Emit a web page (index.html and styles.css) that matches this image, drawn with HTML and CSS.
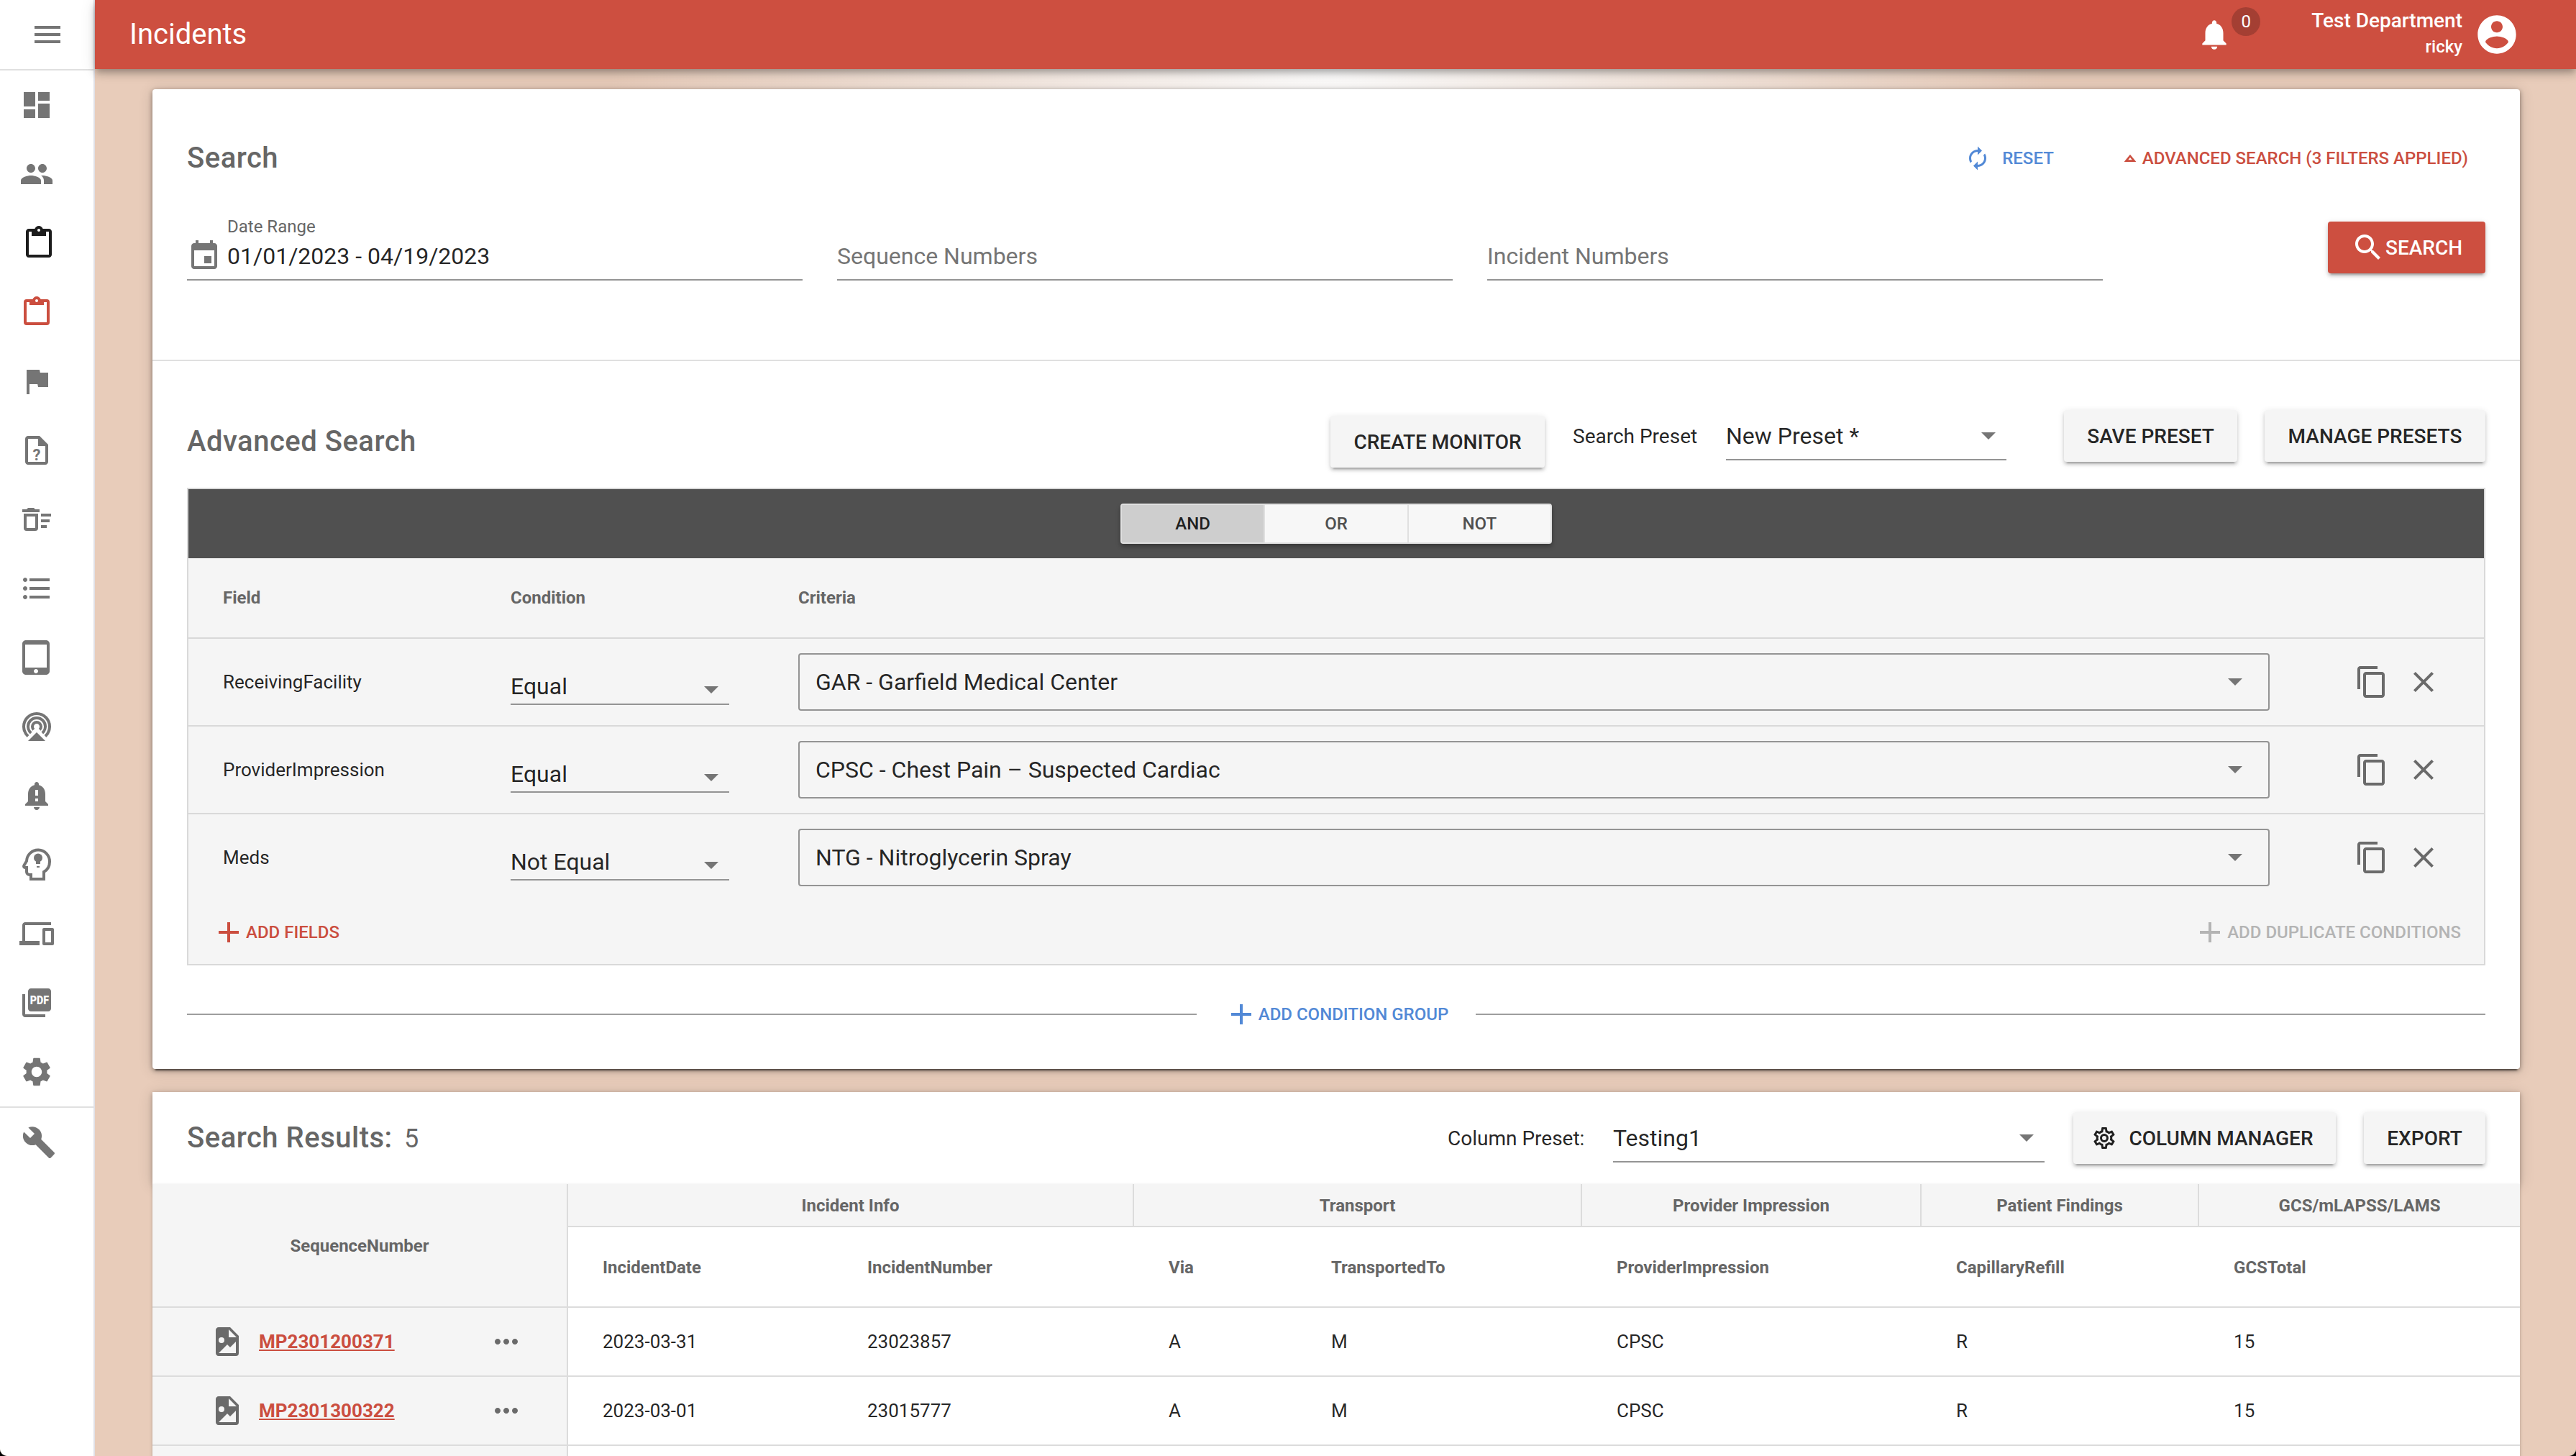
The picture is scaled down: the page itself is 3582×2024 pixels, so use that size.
FILE: index.html
```
<!DOCTYPE html>
<html lang="en">
<head>
  <meta charset="UTF-8">
  <title>Incidents</title>
  <link rel="stylesheet" href="styles.css">
</head>
<body>

<!-- shared icons -->
<svg class="icon-defs" xmlns="http://www.w3.org/2000/svg">
  <symbol id="i-bell" viewBox="0 0 24 24"><path d="M12 22c1.1 0 2-.9 2-2h-4c0 1.1.9 2 2 2zm6-6v-5c0-3.07-1.63-5.64-4.5-6.32V4c0-.83-.67-1.5-1.5-1.5s-1.5.67-1.5 1.5v.68C7.64 5.36 6 7.92 6 11v5l-2 2v1h16v-1l-2-2z"/></symbol>
  <symbol id="i-copy" viewBox="0 0 24 24"><path d="M16 1H4c-1.1 0-2 .9-2 2v14h2V3h12V1zm3 4H8c-1.1 0-2 .9-2 2v14c0 1.1.9 2 2 2h11c1.1 0 2-.9 2-2V7c0-1.1-.9-2-2-2zm0 16H8V7h11v14z"/></symbol>
  <symbol id="i-close" viewBox="0 0 24 24"><path d="M19 6.41L17.59 5 12 10.59 6.41 5 5 6.41 10.59 12 5 17.59 6.41 19 12 13.41 17.59 19 19 17.59 13.41 12z"/></symbol>
  <symbol id="i-plus" viewBox="0 0 24 24"><path d="M19 13h-6v6h-2v-6H5v-2h6V5h2v6h6v2z"/></symbol>
  <symbol id="i-file-image" viewBox="0 0 24 24"><path d="M13,9H18.5L13,3.5V9M6,2H14L20,8V20A2,2 0 0,1 18,22H6C4.89,22 4,21.1 4,20V4C4,2.89 4.89,2 6,2M6,20H18V12L14,16L12,14L6,20M8,9A2,2 0 0,0 6,11A2,2 0 0,0 8,13A2,2 0 0,0 10,11A2,2 0 0,0 8,9Z"/></symbol>
  <symbol id="i-dots" viewBox="0 0 24 24"><path d="M6 10c-1.1 0-2 .9-2 2s.9 2 2 2 2-.9 2-2-.9-2-2-2zm12 0c-1.1 0-2 .9-2 2s.9 2 2 2 2-.9 2-2-.9-2-2-2zm-6 0c-1.1 0-2 .9-2 2s.9 2 2 2 2-.9 2-2-.9-2-2-2z"/></symbol>
</svg>

<div class="app">
  <nav class="sidebar">
    <div class="menu-toggle">
      <svg class="icon" viewBox="0 0 24 24"><path d="M3 18h18v-2H3v2zm0-5h18v-2H3v2zm0-7v2h18V6H3z"/></svg>
    </div>
    <div class="nav-list">
      <svg class="icon" viewBox="0 0 24 24"><path d="M3 13h8V3H3v10zm0 8h8v-6H3v6zm10 0h8V11h-8v10zm0-18v6h8V3h-8z"/></svg>
      <svg class="icon" viewBox="0 0 24 24"><path d="M16 11c1.66 0 2.99-1.34 2.99-3S17.66 5 16 5c-1.66 0-3 1.34-3 3s1.34 3 3 3zm-8 0c1.66 0 2.99-1.34 2.99-3S9.66 5 8 5C6.34 5 5 6.34 5 8s1.34 3 3 3zm0 2c-2.33 0-7 1.17-7 3.5V19h14v-2.5c0-2.33-4.67-3.5-7-3.5zm8 0c-.29 0-.62.02-.97.05 1.16.84 1.97 1.97 1.97 3.45V19h6v-2.5c0-2.33-4.67-3.5-7-3.5z"/></svg>
      <svg class="icon dark" viewBox="0 0 24 24"><path d="M19 2h-4.18C14.4.84 13.3 0 12 0c-1.3 0-2.4.84-2.82 2H5c-1.1 0-2 .9-2 2v16c0 1.1.9 2 2 2h14c1.1 0 2-.9 2-2V4c0-1.1-.9-2-2-2zm-7 0c.55 0 1 .45 1 1s-.45 1-1 1-1-.45-1-1 .45-1 1-1zm7 18H5V4h2v3h10V4h2v16z"/></svg>
      <svg class="icon active" viewBox="0 0 24 24"><path d="M19,3H14.82C14.4,1.84 13.3,1 12,1C10.7,1 9.6,1.84 9.18,3H5A2,2 0 0,0 3,5V19A2,2 0 0,0 5,21H19A2,2 0 0,0 21,19V5A2,2 0 0,0 19,3M12,3A1,1 0 0,1 13,4A1,1 0 0,1 12,5A1,1 0 0,1 11,4A1,1 0 0,1 12,3M7,7H17V5H19V19H5V5H7V7Z"/></svg>
      <svg class="icon" viewBox="0 0 24 24"><path d="M14.4 6L14 4H5v17h2v-7h5.6l.4 2h7V6z"/></svg>
      <svg class="icon" viewBox="0 0 24 24"><path d="M14 2H6c-1.1 0-2 .9-2 2v16c0 1.1.9 2 2 2h12c1.1 0 2-.9 2-2V8l-6-6zm4 18H6V4h7v5h5v11z"/><text class="q-mark" x="12" y="19" text-anchor="middle">?</text></svg>
      <svg class="icon" viewBox="0 0 24 24"><path d="M15,16H19V18H15V16M15,8H22V10H15V8M15,12H21V14H15V12M11,10V18H5V10H11M13,8H3V18A2,2 0 0,0 5,20H11A2,2 0 0,0 13,18V8M14,5H11L10,4H6L5,5H2V7H14V5Z"/></svg>
      <svg class="icon" viewBox="0 0 24 24"><path d="M4 10.5c-.83 0-1.5.67-1.5 1.5s.67 1.5 1.5 1.5 1.5-.67 1.5-1.5-.67-1.5-1.5-1.5zm0-6c-.83 0-1.5.67-1.5 1.5S3.17 7.5 4 7.5 5.5 6.83 5.5 6 4.83 4.5 4 4.5zm0 12c-.83 0-1.5.68-1.5 1.5s.68 1.5 1.5 1.5 1.5-.68 1.5-1.5-.67-1.5-1.5-1.5zM7 19h14v-2H7v2zm0-6h14v-2H7v2zm0-8v2h14V5H7z"/></svg>
      <svg class="icon" viewBox="0 0 24 24"><path d="M18.5 0h-14C3.12 0 2 1.12 2 2.5v19C2 22.88 3.12 24 4.5 24h14c1.38 0 2.5-1.12 2.5-2.5v-19C21 1.12 19.88 0 18.5 0zm-7 23c-.83 0-1.5-.67-1.5-1.5s.67-1.5 1.5-1.5 1.5.67 1.5 1.5-.67 1.5-1.5 1.5zm7.5-4H4V3h15v16z"/></svg>
      <svg class="icon" viewBox="0 0 24 24"><path d="M12 16l-6 6h12z"/><path class="line" d="M6 18.7a9 9 0 1 1 12 0M8.1 16.5a6 6 0 1 1 7.8 0M9.9 14.2a3 3 0 1 1 4.2 0"/></svg>
      <svg class="icon" viewBox="0 0 24 24"><use href="#i-bell"/><path class="cutout" d="M11 8h2v4h-2zM11 14h2v2h-2z"/></svg>
      <svg class="icon" viewBox="0 0 24 24"><path class="line" d="M17 22H8v-3H7a2 2 0 0 1-2-2v-3H4c-.9 0-1.2-.8-.8-1.5L5 9.5A8 8 0 0 1 21 10c0 3-1.5 5.6-4 7v5z"/><circle cx="13" cy="7.2" r="3"/><path d="M11.5 9h3v2.5h-3zM12 13h2v1h-2z"/></svg>
      <svg class="icon" viewBox="0 0 24 24"><path d="M4 6h18V4H4c-1.1 0-2 .9-2 2v11H0v3h14v-3H4V6zm19 2h-6c-.55 0-1 .45-1 1v10c0 .55.45 1 1 1h6c.55 0 1-.45 1-1V9c0-.55-.45-1-1-1zm-1 10h-4v-8h4v8z"/></svg>
      <svg class="icon" viewBox="0 0 24 24"><path d="M20 2H8c-1.1 0-2 .9-2 2v12c0 1.1.9 2 2 2h12c1.1 0 2-.9 2-2V4c0-1.1-.9-2-2-2zM4 6H2v14c0 1.1.9 2 2 2h14v-2H4V6z"/><text class="pdf-label" x="14" y="12.9" text-anchor="middle" textLength="13.2" lengthAdjust="spacingAndGlyphs">PDF</text></svg>
      <svg class="icon" viewBox="0 0 24 24"><path d="M19.14 12.94c.04-.3.06-.61.06-.94 0-.32-.02-.64-.07-.94l2.03-1.58c.18-.14.23-.41.12-.61l-1.92-3.32c-.12-.22-.37-.29-.59-.22l-2.39.96c-.5-.38-1.03-.7-1.62-.94l-.36-2.54c-.04-.24-.24-.41-.48-.41h-3.84c-.24 0-.43.17-.47.41l-.36 2.54c-.59.24-1.13.57-1.62.94l-2.39-.96c-.22-.08-.47 0-.59.22L2.74 8.87c-.12.21-.08.47.12.61l2.03 1.58c-.05.3-.09.63-.09.94s.02.64.07.94l-2.03 1.58c-.18.14-.23.41-.12.61l1.92 3.32c.12.22.37.29.59.22l2.39-.96c.5.38 1.03.7 1.62.94l.36 2.54c.05.24.24.41.48.41h3.84c.24 0 .44-.17.47-.41l.36-2.54c.59-.24 1.13-.56 1.62-.94l2.39.96c.22.08.47 0 .59-.22l1.92-3.32c.12-.22.07-.47-.12-.61l-2.01-1.58zM12 15.6c-1.98 0-3.6-1.62-3.6-3.6s1.62-3.6 3.6-3.6 3.6 1.62 3.6 3.6-1.62 3.6-3.6 3.6z"/></svg>
    </div>
    <div class="nav-tools">
      <svg class="icon" viewBox="0 0 24 24"><path d="M22.7 19l-9.1-9.1c.9-2.3.4-5-1.5-6.9-2-2-5-2.4-7.4-1.3L9 6 6 9 1.6 4.7C.4 7.1.9 10.1 2.9 12.1c1.9 1.9 4.6 2.4 6.9 1.5l9.1 9.1c.4.4 1 .4 1.4 0l2.3-2.3c.5-.4.5-1.1.1-1.4z"/></svg>
    </div>
  </nav>

  <div class="page">
    <header class="topbar">
      <h1>Incidents</h1>
      <div class="notifications">
        <svg class="icon" viewBox="0 0 24 24"><use href="#i-bell"/></svg>
        <span class="badge">0</span>
      </div>
      <div class="user">
        <div class="department">Test Department</div>
        <div class="username">ricky</div>
      </div>
      <svg class="icon avatar" viewBox="0 0 24 24"><path d="M12 2C6.48 2 2 6.48 2 12s4.48 10 10 10 10-4.48 10-10S17.52 2 12 2zm0 3c1.66 0 3 1.34 3 3s-1.34 3-3 3-3-1.34-3-3 1.34-3 3-3zm0 14.2c-2.5 0-4.71-1.28-6-3.22.03-1.99 4-3.08 6-3.08 1.99 0 5.97 1.09 6 3.08-1.29 1.94-3.5 3.22-6 3.22z"/></svg>
    </header>

    <main class="content">
      <section class="card">
        <div class="search-panel">
          <div class="search-head">
            <h2>Search</h2>
            <a class="link-btn blue reset">
              <svg class="icon" viewBox="0 0 24 24"><path d="M12 6v3l4-4-4-4v3c-4.42 0-8 3.58-8 8 0 1.57.46 3.03 1.24 4.26L6.7 14.8c-.45-.83-.7-1.79-.7-2.8 0-3.31 2.69-6 6-6zm6.76 1.74L17.3 9.2c.44.84.7 1.79.7 2.8 0 3.31-2.69 6-6 6v-3l-4 4 4 4v-3c4.42 0 8-3.58 8-8 0-1.57-.46-3.03-1.24-4.26z"/></svg>
              RESET
            </a>
            <a class="link-btn red">
              <svg class="tri" viewBox="0 0 16 10"><path d="M8 1.8L13.5 8.6H2.5z"/></svg>
              ADVANCED SEARCH (3 FILTERS APPLIED)
            </a>
          </div>
          <div class="search-fields">
            <div class="field">
              <svg class="icon" viewBox="0 0 24 24"><path d="M17 12h-5v5h5v-5zM16 1v2H8V1H6v2H5c-1.11 0-1.99.9-1.99 2L3 19c0 1.1.89 2 2 2h14c1.1 0 2-.9 2-2V5c0-1.1-.9-2-2-2h-1V1h-2zm3 18H5V8h14v11z"/></svg>
              <div>
                <div class="field-label">Date Range</div>
                <div class="field-value">01/01/2023 - 04/19/2023</div>
              </div>
            </div>
            <div class="field"><div class="placeholder">Sequence Numbers</div></div>
            <div class="field"><div class="placeholder">Incident Numbers</div></div>
            <button class="btn primary">
              <svg class="icon" viewBox="0 0 24 24"><path d="M15.5 14h-.79l-.28-.27C15.41 12.59 16 11.11 16 9.5 16 5.91 13.09 3 9.5 3S3 5.91 3 9.5 5.91 16 9.5 16c1.61 0 3.09-.59 4.23-1.57l.27.28v.79l5 4.99L20.49 19l-4.99-5zm-6 0C7.01 14 5 11.99 5 9.5S7.01 5 9.5 5 14 7.01 14 9.5 11.99 14 9.5 14z"/></svg>
              SEARCH
            </button>
          </div>
        </div>

        <div class="advanced-panel">
          <div class="advanced-head">
            <h2>Advanced Search</h2>
            <button class="btn create-monitor">CREATE MONITOR</button>
            <div class="preset-tools">
              <span class="preset-label">Search Preset</span>
              <div class="select preset-select">New Preset *<i class="caret"></i></div>
              <button class="btn save-preset">SAVE PRESET</button>
              <button class="btn manage-presets">MANAGE PRESETS</button>
            </div>
          </div>

          <div class="group">
            <div class="group-bar">
              <div class="toggle">
                <span class="on">AND</span>
                <span>OR</span>
                <span>NOT</span>
              </div>
            </div>
            <div class="cond-row cond-head">
              <div>Field</div>
              <div>Condition</div>
              <div>Criteria</div>
            </div>
            <div class="cond-row">
              <div>ReceivingFacility</div>
              <div class="select cond-select">Equal<i class="caret"></i></div>
              <div class="criteria">GAR - Garfield Medical Center<i class="caret"></i></div>
              <div class="actions"><svg class="icon"><use href="#i-copy"/></svg><svg class="icon"><use href="#i-close"/></svg></div>
            </div>
            <div class="cond-row">
              <div>ProviderImpression</div>
              <div class="select cond-select">Equal<i class="caret"></i></div>
              <div class="criteria">CPSC - Chest Pain – Suspected Cardiac<i class="caret"></i></div>
              <div class="actions"><svg class="icon"><use href="#i-copy"/></svg><svg class="icon"><use href="#i-close"/></svg></div>
            </div>
            <div class="cond-row last">
              <div>Meds</div>
              <div class="select cond-select">Not Equal<i class="caret"></i></div>
              <div class="criteria">NTG - Nitroglycerin Spray<i class="caret"></i></div>
              <div class="actions"><svg class="icon"><use href="#i-copy"/></svg><svg class="icon"><use href="#i-close"/></svg></div>
            </div>
            <div class="group-foot">
              <a class="link-btn red"><svg class="icon"><use href="#i-plus"/></svg>ADD FIELDS</a>
              <a class="link-btn disabled"><svg class="icon"><use href="#i-plus"/></svg>ADD DUPLICATE CONDITIONS</a>
            </div>
          </div>

          <div class="add-group">
            <a class="link-btn blue"><svg class="icon"><use href="#i-plus"/></svg>ADD CONDITION GROUP</a>
          </div>
        </div>
      </section>

      <section class="results">
        <div class="results-head">
          <h2>Search Results: <span>5</span></h2>
          <span class="preset-label">Column Preset:</span>
          <div class="select column-select">Testing1<i class="caret"></i></div>
          <button class="btn column-manager">
            <svg class="icon" viewBox="0 0 24 24"><path d="M12,8A4,4 0 0,1 16,12A4,4 0 0,1 12,16A4,4 0 0,1 8,12A4,4 0 0,1 12,8M12,10A2,2 0 0,0 10,12A2,2 0 0,0 12,14A2,2 0 0,0 14,12A2,2 0 0,0 12,10M10,22C9.75,22 9.54,21.82 9.5,21.58L9.13,18.93C8.5,18.68 7.96,18.34 7.44,17.94L4.95,18.95C4.73,19.03 4.46,18.95 4.34,18.73L2.34,15.27C2.21,15.05 2.27,14.78 2.46,14.63L4.57,12.97L4.5,12L4.57,11L2.46,9.37C2.27,9.22 2.21,8.95 2.34,8.73L4.34,5.27C4.46,5.05 4.73,4.96 4.95,5.05L7.44,6.05C7.96,5.66 8.5,5.32 9.13,5.07L9.5,2.42C9.54,2.18 9.75,2 10,2H14C14.25,2 14.46,2.18 14.5,2.42L14.87,5.07C15.5,5.32 16.04,5.66 16.56,6.05L19.05,5.05C19.27,4.96 19.54,5.05 19.66,5.27L21.66,8.73C21.79,8.95 21.73,9.22 21.54,9.37L19.43,11L19.5,12L19.43,13L21.54,14.63C21.73,14.78 21.79,15.05 21.66,15.27L19.66,18.73C19.54,18.95 19.27,19.04 19.05,18.95L16.56,17.95C16.04,18.34 15.5,18.68 14.87,18.93L14.5,21.58C14.46,21.82 14.25,22 14,22H10M11.25,4L10.88,6.61C9.68,6.86 8.62,7.5 7.85,8.39L5.44,7.35L4.69,8.65L6.8,10.2C6.4,11.37 6.4,12.64 6.8,13.8L4.68,15.36L5.43,16.66L7.86,15.62C8.63,16.5 9.68,17.14 10.87,17.38L11.24,20H12.76L13.13,17.39C14.32,17.14 15.37,16.5 16.14,15.62L18.57,16.66L19.32,15.36L17.2,13.81C17.6,12.64 17.6,11.37 17.2,10.2L19.31,8.65L18.56,7.35L16.15,8.39C15.38,7.5 14.32,6.86 13.12,6.62L12.75,4H11.25Z"/></svg>
            COLUMN MANAGER
          </button>
          <button class="btn export">EXPORT</button>
        </div>
        <table>
          <colgroup>
            <col class="c-seq"><col class="c-date"><col class="c-num"><col class="c-via">
            <col class="c-to"><col class="c-imp"><col class="c-cap"><col class="c-gcs">
          </colgroup>
          <thead>
            <tr class="groups">
              <th rowspan="2" class="seq">SequenceNumber</th>
              <th colspan="2">Incident Info</th>
              <th colspan="2">Transport</th>
              <th>Provider Impression</th>
              <th>Patient Findings</th>
              <th>GCS/mLAPSS/LAMS</th>
            </tr>
            <tr class="cols">
              <th>IncidentDate</th>
              <th>IncidentNumber</th>
              <th>Via</th>
              <th>TransportedTo</th>
              <th>ProviderImpression</th>
              <th>CapillaryRefill</th>
              <th>GCSTotal</th>
            </tr>
          </thead>
          <tbody>
            <tr>
              <td class="seq"><div class="seq-cell"><svg class="icon"><use href="#i-file-image"/></svg><a>MP2301200371</a><svg class="icon more"><use href="#i-dots"/></svg></div></td>
              <td>2023-03-31</td><td>23023857</td><td>A</td><td>M</td><td>CPSC</td><td>R</td><td>15</td>
            </tr>
            <tr>
              <td class="seq"><div class="seq-cell"><svg class="icon"><use href="#i-file-image"/></svg><a>MP2301300322</a><svg class="icon more"><use href="#i-dots"/></svg></div></td>
              <td>2023-03-01</td><td>23015777</td><td>A</td><td>M</td><td>CPSC</td><td>R</td><td>15</td>
            </tr>
            <tr>
              <td class="seq"></td>
              <td></td><td></td><td></td><td></td><td></td><td></td><td></td>
            </tr>
          </tbody>
        </table>
      </section>
    </main>
  </div>
</div>

</body>
</html>
```

FILE: styles.css
```
* { margin: 0; padding: 0; box-sizing: border-box; }
html {
  background: #000;
}
body {
  font-family: Roboto, sans-serif;
  font-size: 24px;
  color: rgba(0, 0, 0, .87);
  height: 100vh;
  overflow: hidden;
}
.icon-defs {
  display: none;
}
.icon {
  width: 48px;
  height: 48px;
  flex: none;
  fill: currentColor;
}
.icon .line {
  fill: none;
  stroke: currentColor;
  stroke-width: 2;
}
.icon .cutout {
  fill: #fff;
}
.app {
  display: flex;
  height: 100vh;
  overflow: hidden;
  background: #e8ccba;
  border-radius: 0 0 10px 10px;
}
h2 {
  font-size: 40px;
  font-weight: 500;
  letter-spacing: .5px;
  color: #666;
  margin-bottom: 2px;
}

/* sidebar */
.sidebar {
  width: 132px;
  flex: none;
  background: #fff;
  border-right: 2px solid #e0e0e6;
  color: #757575;
}
.menu-toggle {
  height: 98px;
  padding: 24px 0 0 42px;
  border-bottom: 2px solid #e0e0e0;
}
.nav-list {
  height: 1440px;
  padding: 24px 0 0 27px;
  display: flex;
  flex-direction: column;
  gap: 48px;
}
.nav-list .dark {
  color: #1c1c1c;
  margin-left: 3px;
}
.nav-list .active {
  color: #cb4e3f;
}
.q-mark {
  font-size: 11px;
  font-weight: 700;
}
.pdf-label {
  font-size: 8px;
  font-weight: 900;
  fill: #fff;
}
.nav-tools {
  border-top: 2px solid #e0e0e0;
  padding: 24px 0 0 30px;
}

/* top bar */
.page {
  flex: 1;
  min-width: 0;
  background: radial-gradient(ellipse 1000px 360px at 1716px 96px, #fff, #e8ccba);
}
.topbar {
  position: relative;
  z-index: 2;
  height: 96px;
  display: flex;
  align-items: center;
  padding: 0 78px 0 48px;
  color: #fff;
  background: #cd4f40;
  box-shadow: 0 4px 8px -2px rgba(0, 0, 0, .2), 0 8px 10px rgba(0, 0, 0, .14), 0 2px 20px rgba(0, 0, 0, .12);
}
.topbar h1 {
  font-size: 40px;
  font-weight: 400;
  margin: 0 auto 2px 0;
}
.notifications {
  position: relative;
  margin-right: 110px;
}
.notifications .icon {
  display: block;
  width: 50px;
  height: 50px;
}
.badge {
  position: absolute;
  left: 49px;
  top: -13px;
  width: 40px;
  height: 40px;
  border-radius: 50%;
  background: #a43f33;
  text-align: center;
  line-height: 40px;
}
.user {
  text-align: right;
  font-weight: 500;
  margin-bottom: 2px;
}
.department {
  font-size: 28px;
  line-height: 36px;
}
.username {
  line-height: 36px;
}
.avatar {
  width: 64px;
  height: 64px;
  margin-left: 16px;
}

/* cards */
.content {
  padding: 28px 78px 0 80px;
  display: flex;
  flex-direction: column;
  gap: 32px;
}
.card {
  background: #fff;
  height: 1362px;
  border-radius: 4px;
  box-shadow: 0 6px 2px -4px rgba(0, 0, 0, .45), 0 2px 6px rgba(0, 0, 0, .4), 0 2px 20px rgba(0, 0, 0, .16);
}
.link-btn {
  display: flex;
  align-items: center;
  font-weight: 500;
}
.red { color: #cb4e3f; }
.blue { color: #5289d6; }
.disabled { color: #b4b4b4; }
.btn {
  height: 72px;
  display: flex;
  align-items: center;
  justify-content: center;
  border: none;
  border-radius: 4px;
  font: 500 28px Roboto, sans-serif;
  color: rgba(0, 0, 0, .87);
  background: #f5f5f5;
  box-shadow: 0 6px 2px -4px rgba(0, 0, 0, .2), 0 4px 4px rgba(0, 0, 0, .14), 0 2px 10px rgba(0, 0, 0, .12);
}
.btn.primary {
  width: 219px;
  color: #fff;
  background: #cd4f40;
}
.select {
  display: flex;
  align-items: center;
  justify-content: space-between;
  font-size: 32px;
  border-bottom: 2px solid #949494;
  padding: 2px 15px 0 0;
}
.caret {
  border: 10px solid transparent;
  border-top-color: #757575;
  border-bottom: none;
}

/* search */
.search-panel {
  height: 378px;
  padding: 72px 48px 0;
  border-bottom: 2px solid #e0e0e0;
}
.search-head {
  height: 48px;
  display: flex;
  align-items: center;
  padding-right: 24px;
}
.search-head h2 {
  margin-right: auto;
}
.reset {
  margin-right: 98px;
}
.reset .icon {
  width: 36px;
  height: 36px;
  margin-right: 16px;
}
.tri {
  width: 16px;
  height: 10px;
  margin-right: 9px;
  fill: none;
  stroke: currentColor;
  stroke-width: 2.6;
}
.search-fields {
  margin-top: 56px;
  display: flex;
  gap: 48px;
}
.field {
  width: 856px;
  height: 90px;
  display: flex;
  align-items: flex-end;
  gap: 8px;
  padding-bottom: 8px;
  border-bottom: 2px solid #949494;
}
.field-label {
  line-height: 30px;
  margin-bottom: 2px;
  color: #666;
}
.field-value, .placeholder {
  font-size: 32px;
  line-height: 48px;
}
.placeholder, .field .icon {
  color: #757575;
}
.search-fields .btn {
  margin: 8px 0 0 auto;
}

/* advanced search */
.advanced-panel {
  padding: 76px 48px 0;
}
.advanced-head {
  height: 72px;
  display: flex;
  align-items: center;
  margin-bottom: 28px;
}
.advanced-head h2 {
  margin-right: auto;
}
.create-monitor {
  width: 298px;
  margin-right: 39px;
}
.preset-tools {
  display: flex;
  align-items: center;
  margin-bottom: 16px;
}
.preset-label {
  font-size: 28px;
}
.preset-tools .preset-label {
  width: 213px;
}
.preset-select {
  width: 390px;
  height: 68px;
  margin-right: 80px;
}
.save-preset {
  width: 241px;
  margin-right: 38px;
}
.manage-presets {
  width: 307px;
}
.group {
  border: 2px solid #d9d9d9;
  background: #f5f5f5;
}
.group-bar {
  height: 96px;
  display: flex;
  align-items: center;
  justify-content: center;
  background: #505050;
}
.toggle {
  width: 600px;
  height: 56px;
  display: flex;
  border: 2px solid #e0e0e0;
  border-radius: 4px;
  background: #f7f7f7;
  box-shadow: 0 4px 6px rgba(0, 0, 0, .3);
}
.toggle span {
  flex: 1;
  line-height: 52px;
  text-align: center;
  font-weight: 500;
  color: #505050;
}
.toggle span + span {
  border-left: 2px solid #e0e0e0;
}
.toggle .on {
  background: #cecece;
  color: rgba(0, 0, 0, .87);
}
.cond-row {
  height: 122px;
  padding-left: 48px;
  display: grid;
  grid-template-columns: 400px 400px 2046px auto;
  align-items: center;
  font-size: 26px;
  border-bottom: 2px solid #d9d9d9;
}
.cond-row.last {
  height: 120px;
  border-bottom: none;
}
.cond-head {
  height: 112px;
  font-size: 24px;
  font-weight: 700;
  color: #666;
}
.cond-select {
  width: 304px;
  height: 52px;
  margin-top: 12px;
}
.cond-select .caret {
  margin-top: 10px;
}
.criteria {
  height: 80px;
  display: flex;
  align-items: center;
  justify-content: space-between;
  padding: 0 36px 0 22px;
  font-size: 32px;
  border: 2px solid #949494;
  border-radius: 4px;
}
.actions {
  display: flex;
  gap: 24px;
  margin-left: 118px;
  color: #6a6a6a;
}
.group-foot {
  height: 88px;
  display: flex;
  align-items: center;
  justify-content: space-between;
  padding: 0 32px;
}
.add-group {
  height: 136px;
  display: flex;
  align-items: center;
}
.add-group::before, .add-group::after {
  content: "";
  flex: 1;
  height: 2px;
  background: #9e9e9e;
}
.add-group .link-btn {
  padding: 0 38px;
}

/* results */
.results-head {
  height: 128px;
  display: flex;
  align-items: center;
  padding: 0 48px;
  background: #fff;
  box-shadow: 0 2px 6px rgba(0, 0, 0, .3), 0 2px 20px rgba(0, 0, 0, .14);
}
.results-head h2 {
  margin-right: auto;
}
.results-head h2 span {
  font-size: 36px;
  font-weight: 400;
  margin-left: 6px;
}
.results-head .preset-label {
  width: 230px;
}
.column-select {
  width: 600px;
  height: 68px;
  margin-right: 40px;
}
.column-manager {
  width: 365px;
  padding-right: 6px;
  margin-right: 39px;
}
.column-manager .icon {
  width: 36px;
  height: 36px;
  margin-right: 16px;
}
.export {
  width: 169px;
}
table {
  position: relative;
  width: 3292px;
  table-layout: fixed;
  border-collapse: separate;
  border-spacing: 0;
  background: #fff;
  box-shadow: 0 2px 4px rgba(0, 0, 0, .25);
}
.c-seq { width: 578px; }
.c-date { width: 368px; }
.c-num { width: 419px; }
.c-via { width: 226px; }
.c-to { width: 397px; }
.c-imp { width: 472px; }
.c-cap { width: 386px; }
.c-gcs { width: 446px; }
th {
  font-weight: 700;
  color: #666;
  padding-top: 2px;
}
th, td {
  border-bottom: 2px solid #dcdcdc;
}
.groups th {
  height: 60px;
  background: #f5f5f5;
  border-right: 2px solid #dcdcdc;
}
.groups th:last-child {
  border-right: none;
}
.cols th {
  height: 112px;
  text-align: left;
  padding-left: 48px;
}
td {
  height: 96px;
  padding-left: 48px;
  font-size: 26px;
}
td.seq {
  padding-left: 80px;
  background: #f5f5f5;
  border-right: 2px solid #dcdcdc;
}
.seq-cell {
  display: flex;
  align-items: center;
  color: #6a6a6a;
}
.seq-cell a {
  margin: 0 auto 0 20px;
  font-weight: 700;
  color: #cb4e3f;
  text-decoration: underline;
}
.seq-cell .more {
  margin-right: 60px;
}
```
